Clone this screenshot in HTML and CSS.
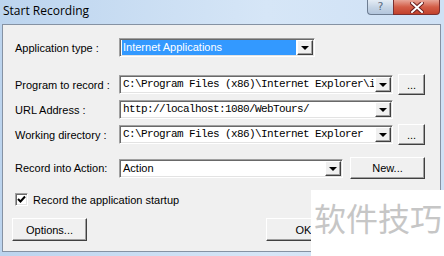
FILE: index.html
```html
<!DOCTYPE html>
<html lang="en">
<head>
    <meta charset="UTF-8">
    <title>Start Recording</title>
    <link rel="stylesheet" href="styles.css">
</head>
<body>
    <div class="window">
        <div class="titlebar">
            <span class="title">Start Recording</span>
            <div class="caption-buttons">
                <span class="cap-help">?</span>
                <span class="cap-close">
                    <svg width="14" height="11" viewBox="0 0 14 11">
                        <path d="M2 1 L12 10 M12 1 L2 10" stroke="#6b2020" stroke-width="4" stroke-linecap="square"/>
                        <path d="M2 1 L12 10 M12 1 L2 10" stroke="#ffffff" stroke-width="2" stroke-linecap="square"/>
                    </svg>
                </span>
            </div>
        </div>

        <div class="client">
            <div class="row row-app">
                <label class="label">Application type :</label>
                <div class="combo combo-app">
                    <span class="combo-text selected">Internet Applications</span>
                    <span class="arrow"></span>
                </div>
            </div>

            <div class="row row-program">
                <label class="label">Program to record :</label>
                <div class="combo combo-long">
                    <span class="combo-text mono">C:\Program Files (x86)\Internet Explorer\i</span>
                    <span class="arrow"></span>
                </div>
                <button class="button button-dots">...</button>
            </div>

            <div class="row row-tight">
                <label class="label">URL Address :</label>
                <div class="combo combo-long">
                    <span class="combo-text mono">http://localhost:1080/WebTours/</span>
                    <span class="arrow"></span>
                </div>
            </div>

            <div class="row row-tight">
                <label class="label">Working directory :</label>
                <div class="combo combo-long">
                    <span class="combo-text mono">C:\Program Files (x86)\Internet Explorer</span>
                    <span class="arrow"></span>
                </div>
                <button class="button button-dots">...</button>
            </div>

            <div class="row row-action">
                <label class="label">Record into Action:</label>
                <div class="combo combo-action">
                    <span class="combo-text">Action</span>
                    <span class="arrow"></span>
                </div>
                <button class="button button-new">New...</button>
            </div>

            <div class="check-row">
                <span class="checkbox">
                    <svg width="9" height="9" viewBox="0 0 9 9">
                        <path d="M1 4 L3.5 6.5 L8 1.5" stroke="#000" stroke-width="2" fill="none"/>
                    </svg>
                </span>
                <span class="check-label">Record the application startup</span>
            </div>

            <div class="button-row">
                <button class="button button-options">Options...</button>
                <button class="button button-ok">OK</button>
            </div>
        </div>

        <div class="watermark">软件技巧</div>
    </div>
</body>
</html>
```

FILE: styles.css
```css
:root {
  --face: #f0f0f0;
  --frame: #c3d8ee;
  --shadow: #a0a0a0;
  --dark: #404040;
  --highlight: #3399ff;
  --ui-font: 'Liberation Sans', Arial, sans-serif;
}
body {
  margin: 0;
  width: 444px;
  height: 256px;
  overflow: hidden;
  background-color: var(--frame);
}
.window {
  position: relative;
  width: 444px;
  height: 256px;
  background: linear-gradient(to right, #bcd4ee, #d6e6f7 60%, #cfe1f5);
}
.titlebar {
  height: 24px;
  display: flex;
  justify-content: space-between;
  align-items: flex-start;
}
.title {
  font-family: 'Open Sans', 'Noto Sans', sans-serif;
  font-size: 12px;
  color: #000;
  margin: 3px 0 0 3px;
  line-height: 16px;
}
.caption-buttons {
  display: flex;
  margin-right: 4px;
}
.cap-help {
  width: 26px;
  height: 15px;
  box-sizing: border-box;
  border: 1px solid #6d7d92;
  border-top: none;
  border-right: none;
  border-radius: 0 0 0 4px;
  background: linear-gradient(#e4ecf5, #c4d3e4 55%, #b3c6dd);
  font-family: 'DejaVu Sans', sans-serif;
  font-size: 11px;
  line-height: 13px;
  text-align: center;
  color: #5a6b80;
}
.cap-close {
  width: 47px;
  height: 15px;
  box-sizing: border-box;
  border: 1px solid #7b3030;
  border-top: none;
  border-radius: 0 0 4px 0;
  background: linear-gradient(#e8a698, #d35d47 50%, #c2412c);
  display: flex;
  justify-content: center;
  align-items: center;
}
.client {
  margin: 0 3px 0 2px;
  height: 228px;
  box-sizing: border-box;
  border: 1px solid #8592a3;
  background-color: var(--face);
  padding: 13px 0 0 12px;
  font-family: var(--ui-font);
  font-size: 11px;
  color: #000;
}
.row {
  display: flex;
  align-items: center;
  height: 19px;
}
.row-program {
  margin-top: 18px;
}
.row-tight {
  margin-top: 6px;
}
.row-action {
  margin-top: 13px;
  height: 22px;
}
.label {
  width: 104px;
  flex-shrink: 0;
}
.combo {
  height: 19px;
  box-sizing: border-box;
  border: 1px solid;
  border-color: var(--shadow) #fff #fff var(--shadow);
  box-shadow: inset 1px 1px 0 #696969, inset -1px -1px 0 #e3e3e3;
  background: #fff;
  display: flex;
  align-items: center;
  padding: 1px 1px 1px 2px;
}
.combo-app {
  width: 196px;
}
.combo-long {
  width: 274px;
}
.combo-action {
  width: 224px;
}
.combo-text {
  flex: 1;
  height: 15px;
  line-height: 15px;
  white-space: nowrap;
  overflow: hidden;
  padding-left: 1px;
}
.selected {
  background-color: var(--highlight);
  color: #fff;
}
.mono {
  font-family: 'Liberation Mono', 'Courier New', monospace;
  font-size: 11px;
  letter-spacing: -0.6px;
}
.arrow {
  width: 16px;
  height: 15px;
  box-sizing: border-box;
  flex-shrink: 0;
  margin-left: 1px;
  background-color: var(--face);
  border: 1px solid;
  border-color: #fff var(--dark) var(--dark) #fff;
  box-shadow: inset -1px -1px 0 var(--shadow);
  position: relative;
}
.arrow::after {
  content: '';
  position: absolute;
  left: 3px;
  top: 5px;
  border-left: 4px solid transparent;
  border-right: 4px solid transparent;
  border-top: 4px solid #000;
}
.button {
  box-sizing: border-box;
  background-color: var(--face);
  border: 1px solid;
  border-color: #fff var(--dark) var(--dark) #fff;
  box-shadow: inset -1px -1px 0 var(--shadow);
  font-family: var(--ui-font);
  font-size: 11px;
  color: #000;
  padding: 0;
}
.button-dots {
  width: 27px;
  height: 21px;
  margin-left: 5px;
  line-height: 14px;
}
.button-new {
  width: 75px;
  height: 22px;
  margin-left: 7px;
}
.check-row {
  display: flex;
  align-items: center;
  height: 15px;
  margin-top: 13px;
}
.checkbox {
  width: 13px;
  height: 13px;
  box-sizing: border-box;
  border: 1px solid;
  border-color: var(--shadow) #fff #fff var(--shadow);
  box-shadow: inset 1px 1px 0 #696969, inset -1px -1px 0 #e3e3e3;
  background: #fff;
  display: flex;
  justify-content: center;
  align-items: center;
}
.check-label {
  margin-left: 5px;
}
.button-row {
  display: flex;
  margin-top: 11px;
  margin-left: -3px;
}
.button-options,
.button-ok {
  width: 75px;
  height: 23px;
}
.button-ok {
  margin-left: 179px;
}
.watermark {
  position: absolute;
  left: 311px;
  top: 190px;
  right: 0;
  bottom: 0;
  background-color: #fff;
  font-family: 'Noto Sans CJK SC', sans-serif;
  font-size: 32px;
  color: #c6c6c6;
  padding: 8px 0 0 3px;
  line-height: 38px;
  white-space: nowrap;
}
```
